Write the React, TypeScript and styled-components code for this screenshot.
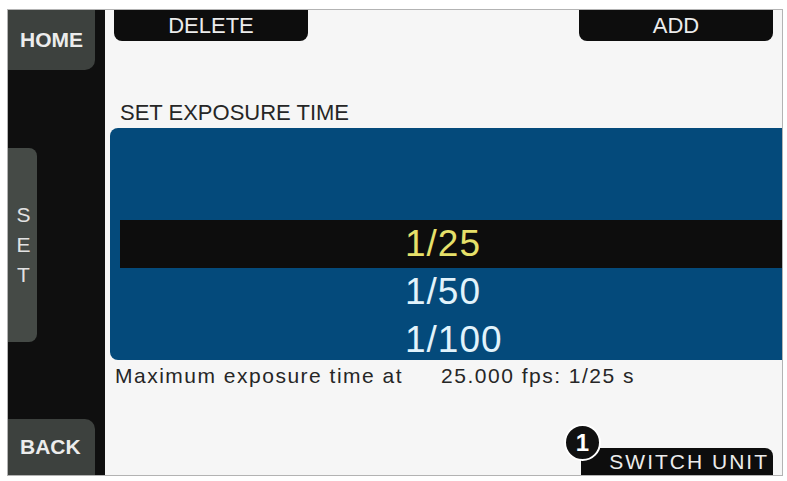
import styled, { createGlobalStyle } from "styled-components";

const GlobalStyle = createGlobalStyle`
  html, body {
    margin: 0;
    padding: 0;
    background: #ffffff;
  }
  body {
    font-family: "Liberation Sans", Arial, sans-serif;
  }
`;

const Page = styled.div`
  width: 787px;
  height: 481px;
  padding: 9px 0 0 7px;
  box-sizing: border-box;
`;

const Screen = styled.div`
  width: 776px;
  height: 467px;
  box-sizing: border-box;
  border: 1px solid #b3b3b3;
  display: grid;
  grid-template-columns: 97px 1fr;
  overflow: hidden;
`;

const Sidebar = styled.nav`
  background: #0f0f0f;
  display: flex;
  flex-direction: column;
  justify-content: space-between;
  align-items: flex-start;
`;

const SideButton = styled.div<{ edge: "top" | "bottom" }>`
  width: 87px;
  height: ${(p) => (p.edge === "top" ? "60px" : "56px")};
  background: #3d413e;
  color: #ececec;
  font-size: 21px;
  font-weight: 700;
  display: flex;
  align-items: center;
  padding-left: 12px;
  box-sizing: border-box;
  border-bottom-right-radius: ${(p) => (p.edge === "top" ? "10px" : "0")};
  border-top-right-radius: ${(p) => (p.edge === "bottom" ? "10px" : "0")};
`;

const SideTab = styled.div`
  width: 29px;
  height: 194px;
  background: #454a46;
  border-radius: 0 8px 8px 0;
  color: #e2e2e2;
  font-size: 21px;
  line-height: 30px;
  display: flex;
  flex-direction: column;
  align-items: center;
  justify-content: center;
  padding-left: 2px;
  box-sizing: border-box;
`;

const Main = styled.main`
  background: #f6f6f6;
  display: flex;
  flex-direction: column;
  color: #262626;
`;

const TopBar = styled.div`
  height: 31px;
  display: flex;
  justify-content: space-between;
  padding: 0 9px;
`;

const SoftKey = styled.div`
  width: 194px;
  height: 31px;
  background: #0d0d0d;
  color: #ececec;
  font-size: 22px;
  display: flex;
  align-items: center;
  justify-content: center;
  border-radius: 0 0 8px 8px;
`;

const Title = styled.div`
  margin: 59px 0 2px 15px;
  font-size: 22px;
  line-height: 26px;
`;

const Picker = styled.div`
  margin-left: 5px;
  height: 232px;
  background: #044a7b;
  border-radius: 8px 0 0 8px;
  padding-top: 92px;
  box-sizing: border-box;
  overflow: hidden;
`;

const PickerRow = styled.div<{ selected?: boolean }>`
  height: 48px;
  margin-left: 10px;
  padding-left: 285px;
  font-size: 37px;
  line-height: 48px;
  letter-spacing: 1px;
  background: ${(p) => (p.selected ? "#0d0d0d" : "transparent")};
  color: ${(p) => (p.selected ? "#e6e06a" : "#e2f3fb")};
`;

const Info = styled.div`
  margin: 4px 0 0 10px;
  font-size: 21px;
  line-height: 24px;
  letter-spacing: 1.5px;
  display: flex;
  gap: 38px;
`;

const BottomBar = styled.div`
  margin-top: auto;
  display: flex;
  justify-content: flex-end;
  padding-right: 9px;
`;

const WideKey = styled.div`
  position: relative;
  width: 192px;
  height: 27px;
  background: #0d0d0d;
  color: #ececec;
  font-size: 21px;
  letter-spacing: 2px;
  display: flex;
  align-items: flex-end;
  justify-content: flex-end;
  padding: 0 4px 1px 0;
  box-sizing: border-box;
  border-radius: 0 8px 0 0;
`;

const Badge = styled.span`
  position: absolute;
  left: -17px;
  top: -24px;
  width: 33px;
  height: 33px;
  border-radius: 50%;
  background: #111111;
  border: 2px solid #ffffff;
  color: #ffffff;
  font-size: 24px;
  font-weight: 700;
  letter-spacing: 0;
  display: flex;
  align-items: center;
  justify-content: center;
`;

const values = ["1/25", "1/50", "1/100"];

const App = () => {
  return (
    <Page>
      <GlobalStyle />
      <Screen>
        <Sidebar>
          <SideButton edge="top">HOME</SideButton>
          <SideTab>
            <span>S</span>
            <span>E</span>
            <span>T</span>
          </SideTab>
          <SideButton edge="bottom">BACK</SideButton>
        </Sidebar>
        <Main>
          <TopBar>
            <SoftKey>DELETE</SoftKey>
            <SoftKey>ADD</SoftKey>
          </TopBar>
          <Title>SET EXPOSURE TIME</Title>
          <Picker>
            {values.map((v, i) => (
              <PickerRow key={v} selected={i === 0}>
                {v}
              </PickerRow>
            ))}
          </Picker>
          <Info>
            <span>Maximum exposure time at</span>
            <span>25.000 fps: 1/25 s</span>
          </Info>
          <BottomBar>
            <WideKey>
              <Badge>1</Badge>
              SWITCH UNIT
            </WideKey>
          </BottomBar>
        </Main>
      </Screen>
    </Page>
  );
};

export default App;
